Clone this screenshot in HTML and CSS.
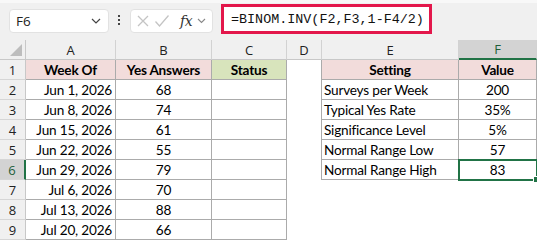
FILE: index.html
```html
<!DOCTYPE html>
<html>
<head>
<meta charset="utf-8">
<link rel="stylesheet" href="styles.css">
</head>
<body>
<div class="app">
  <div class="toolbar">
    <div class="namebox">
      <span class="name">F6</span>
      <svg class="chev" width="10" height="6" viewBox="0 0 10 6"><path d="M1 1 L5 5 L9 1" fill="none" stroke="#444" stroke-width="1.2"/></svg>
    </div>
    <div class="dots"><span></span><span></span><span></span></div>
    <div class="fxbox">
      <svg width="14" height="14" viewBox="0 0 14 14"><path d="M2 2 L12 12 M12 2 L2 12" stroke="#c4c4c4" stroke-width="1.3" fill="none"/></svg>
      <svg width="16" height="14" viewBox="0 0 16 14"><path d="M1.5 7.5 L5.5 12 L14.5 1.5" stroke="#c4c4c4" stroke-width="1.3" fill="none"/></svg>
      <span class="fx">fx</span>
      <svg class="chev2" width="9" height="6" viewBox="0 0 9 6"><path d="M1 1 L4.5 4.5 L8 1" fill="none" stroke="#888" stroke-width="1.1"/></svg>
    </div>
    <div class="formula">
      <div class="formula-hl">=BINOM.INV(F2,F3,1-F4/2)</div>
      <div class="formula-rest"></div>
    </div>
  </div>
  <div class="sheet">
    <div class="ch corner"><span class="tri"></span></div>
    <div class="ch">A</div>
    <div class="ch">B</div>
    <div class="ch">C</div>
    <div class="ch">D</div>
    <div class="ch">E</div>
    <div class="ch sel">F</div>

    <div class="rh">1</div>
    <div class="c b hp ctr">Week Of</div>
    <div class="c b hp ctr">Yes Answers</div>
    <div class="c b hg ctr">Status</div>
    <div class="c d dl"></div>
    <div class="c b hp ctr">Setting</div>
    <div class="c b hp ctr">Value</div>

    <div class="rh">2</div>
    <div class="c r">Jun 1, 2026</div>
    <div class="c ctr">68</div>
    <div class="c"></div>
    <div class="c d dl"></div>
    <div class="c l">Surveys per Week</div>
    <div class="c ctr">200</div>

    <div class="rh">3</div>
    <div class="c r">Jun 8, 2026</div>
    <div class="c ctr">74</div>
    <div class="c"></div>
    <div class="c d dl"></div>
    <div class="c l">Typical Yes Rate</div>
    <div class="c ctr">35%</div>

    <div class="rh">4</div>
    <div class="c r">Jun 15, 2026</div>
    <div class="c ctr">61</div>
    <div class="c"></div>
    <div class="c d dl"></div>
    <div class="c l">Significance Level</div>
    <div class="c ctr">5%</div>

    <div class="rh">5</div>
    <div class="c r">Jun 22, 2026</div>
    <div class="c ctr">55</div>
    <div class="c"></div>
    <div class="c d dl"></div>
    <div class="c l">Normal Range Low</div>
    <div class="c ctr">57</div>

    <div class="rh rsel">6</div>
    <div class="c r">Jun 29, 2026</div>
    <div class="c ctr">79</div>
    <div class="c"></div>
    <div class="c d dl"></div>
    <div class="c l">Normal Range High</div>
    <div class="c ctr active">83</div>

    <div class="rh">7</div>
    <div class="c r">Jul 6, 2026</div>
    <div class="c ctr">70</div>
    <div class="c"></div>
    <div class="c d"></div>
    <div class="c e"></div>
    <div class="c e"></div>

    <div class="rh">8</div>
    <div class="c r">Jul 13, 2026</div>
    <div class="c ctr">88</div>
    <div class="c"></div>
    <div class="c d"></div>
    <div class="c e"></div>
    <div class="c e"></div>

    <div class="rh">9</div>
    <div class="c r">Jul 20, 2026</div>
    <div class="c ctr">66</div>
    <div class="c"></div>
    <div class="c d"></div>
    <div class="c e"></div>
    <div class="c e"></div>
  </div>
</div>
</body>
</html>
```

FILE: styles.css
```css
html, body {
  margin: 0;
  padding: 0;
  background: #ffffff;
  overflow: hidden;
}
.app {
  width: 537px;
  height: 242px;
  overflow: hidden;
}
.toolbar {
  height: 40px;
  box-sizing: border-box;
  background: #f0f0f0;
  border-top: 3px solid #f8f8f8;
  display: flex;
  align-items: flex-start;
  font-family: "Open Sans", "Noto Sans", sans-serif;
}
.namebox {
  margin: 6px 0 0 9px;
  width: 100px;
  height: 24px;
  box-sizing: border-box;
  background: #ffffff;
  border: 1px solid #e2e2e2;
  border-radius: 4px;
  display: flex;
  align-items: center;
  justify-content: space-between;
  padding: 0 7px 0 6px;
}
.name {
  font-size: 13.5px;
  color: #222;
}
.dots {
  margin: 12px 0 0 9px;
  display: flex;
  flex-direction: column;
  gap: 2px;
}
.dots span {
  width: 2px;
  height: 2px;
  background: #444;
}
.fxbox {
  margin: 6px 0 0 10px;
  width: 83px;
  height: 24px;
  box-sizing: border-box;
  background: #ffffff;
  border: 1px solid #e2e2e2;
  border-radius: 4px;
  display: flex;
  align-items: center;
  padding: 0 4px 0 5px;
  gap: 4px;
}
.fx {
  font-family: "DejaVu Serif", "Liberation Serif", serif;
  font-style: italic;
  font-size: 14px;
  color: #333;
  margin-left: 6px;
  letter-spacing: -0.5px;
}
.chev2 { margin-left: 1px; }
.formula {
  margin: 1px 0 0 8px;
  flex: 1;
  display: flex;
  align-items: center;
}
.formula-hl {
  width: 211px;
  height: 30px;
  box-sizing: border-box;
  border: 3px solid #e3174b;
  background: #ffffff;
  font-family: "Liberation Mono", "DejaVu Sans Mono", monospace;
  font-size: 13.4px;
  color: #111;
  display: flex;
  align-items: center;
  padding-left: 7px;
  white-space: nowrap;
}
.formula-rest {
  flex: 1;
  height: 24px;
  background: #f0f0f0;
}
.sheet {
  display: grid;
  grid-template-columns: 26px 90px 96px 75px 35px 137px 78px;
  grid-auto-rows: 20px;
  font-family: "Lato", "Carlito", sans-serif;
  font-size: 13.6px;
  letter-spacing: -0.2px;
  color: #000;
}
.ch {
  background: #f0f0f0;
  border-right: 1px solid #d2d2d2;
  border-bottom: 1px solid #c8c8c8;
  box-sizing: border-box;
  font-family: "Open Sans", "Noto Sans", sans-serif;
  font-size: 13px;
  letter-spacing: 0;
  color: #222;
  display: flex;
  align-items: center;
  justify-content: center;
}
.corner {
  position: relative;
  border-right: 1px solid #c8c8c8;
}
.tri {
  position: absolute;
  right: 3px;
  bottom: 3px;
  width: 0;
  height: 0;
  border-left: 12px solid transparent;
  border-bottom: 12px solid #bdbdbd;
}
.ch.sel {
  background: #d3d3d3;
  border-bottom: 2px solid #217346;
  color: #1d5e39;
}
.rh {
  background: #f0f0f0;
  border-right: 1px solid #c8c8c8;
  border-bottom: 1px solid #d6d6d6;
  box-sizing: border-box;
  font-family: "Open Sans", "Noto Sans", sans-serif;
  font-size: 13px;
  letter-spacing: 0;
  color: #222;
  display: flex;
  align-items: center;
  justify-content: center;
}
.rh.rsel {
  background: #d3d3d3;
  border-right: 2px solid #217346;
  color: #1d5e39;
}
.c {
  box-sizing: border-box;
  border-right: 1px solid #ababab;
  border-bottom: 1px solid #ababab;
  display: flex;
  align-items: center;
  white-space: nowrap;
  overflow: hidden;
  padding-top: 1px;
}
.c.d { border-bottom: none; border-right: none; }
.c.d.dl { border-right: 1px solid #ababab; }
.c.e { border: none; }
.ctr { justify-content: center; }
.r { justify-content: flex-end; padding-right: 3px; }
.l { padding-left: 2px; }
.b { font-weight: bold; }
.hp { background: #f2dcdb; }
.hg { background: #d8e4bc; }
.active {
  position: relative;
  overflow: visible;
  outline: 2px solid #217346;
  outline-offset: -1px;
}
.active::after {
  content: "";
  position: absolute;
  right: -4px;
  bottom: -4px;
  width: 5px;
  height: 5px;
  background: #217346;
  border: 1px solid #ffffff;
}
```
